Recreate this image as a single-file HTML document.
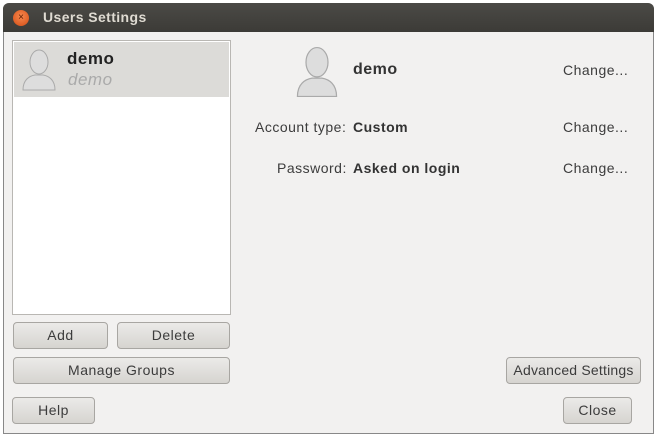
<!DOCTYPE html><html><head><style>
body{margin:0;width:658px;height:436px;background:#fff;font-family:"Liberation Sans","DejaVu Sans",sans-serif;position:relative;overflow:hidden}
.win{position:absolute;left:3px;top:3px;width:651px;height:431px;background:#f2f1f0;border:1px solid #888;border-top:none;box-sizing:border-box;border-radius:6px 6px 0 0}
.tb{position:absolute;left:3px;top:3px;width:651px;height:29px;background:linear-gradient(#4b4a46,#3c3b37);border-radius:6px 6px 0 0}
.close{position:absolute;left:13px;top:10px;width:16px;height:16px;border-radius:50%;background:radial-gradient(circle at 50% 40%,#f7894f,#d34c14);color:#5a1a00;font-size:10px;line-height:16px;text-align:center}
.title{position:absolute;left:43px;top:9px;color:#dfdbd2;font-weight:bold;font-size:14px;letter-spacing:0.4px}
.t{position:absolute;font-size:14px;color:#3c3c3c;white-space:nowrap;letter-spacing:0.5px}
.b{font-weight:bold;color:#333}
.btn{position:absolute;box-sizing:border-box;border:1px solid #a8a6a2;border-radius:4px;background:linear-gradient(#ebeae8,#d6d4d0);font-size:14px;color:#3c3c3c;text-align:center;letter-spacing:0.5px}
.list{position:absolute;left:12px;top:40px;width:219px;height:275px;background:#fff;border:1px solid #b9b7b3;box-sizing:border-box}
.sel{position:absolute;left:1px;top:1px;right:1px;height:55px;background:#dcdbd8}
</style></head><body>
<div class="win"></div>
<div class="tb"></div>
<div class="close">×</div>
<div class="title">Users Settings</div>
<div class="list"><div class="sel"></div></div>
<svg style="position:absolute;left:21px;top:48px" width="36" height="44" viewBox="0 0 36 44"><ellipse cx="18" cy="14" rx="9" ry="12" fill="#ddd" stroke="#aaa"/><path d="M2 42 C2 32 8 28 14 27 L22 27 C28 28 34 32 34 42 Z" fill="#ddd" stroke="#aaa"/></svg>
<div class="t b" style="left:67px;top:49px;font-size:17px;color:#222">demo</div>
<div class="t" style="left:68px;top:70px;font-size:17px;font-style:italic;color:#aaa">demo</div>
<svg style="position:absolute;left:295px;top:45px" width="44" height="54" viewBox="0 0 36 44"><ellipse cx="18" cy="14" rx="9" ry="12" fill="#ddd" stroke="#aaa"/><path d="M2 42 C2 32 8 28 14 27 L22 27 C28 28 34 32 34 42 Z" fill="#ddd" stroke="#aaa"/></svg>
<div class="t b" style="left:353px;top:61px;font-size:16px">demo</div>
<div class="t" style="left:563px;top:62px">Change...</div>
<div class="t" style="left:255px;top:119px">Account type:</div>
<div class="t b" style="left:353px;top:119px">Custom</div>
<div class="t" style="left:563px;top:119px">Change...</div>
<div class="t" style="left:277px;top:160px">Password:</div>
<div class="t b" style="left:353px;top:160px">Asked on login</div>
<div class="t" style="left:563px;top:160px">Change...</div>
<div class="btn" style="left:13px;top:322px;width:95px;height:27px;line-height:25px">Add</div>
<div class="btn" style="left:117px;top:322px;width:113px;height:27px;line-height:25px">Delete</div>
<div class="btn" style="left:13px;top:357px;width:217px;height:27px;line-height:25px">Manage Groups</div>
<div class="btn" style="left:12px;top:397px;width:83px;height:27px;line-height:25px">Help</div>
<div class="btn" style="left:506px;top:357px;width:135px;height:27px;line-height:25px;letter-spacing:0.2px">Advanced Settings</div>
<div class="btn" style="left:563px;top:397px;width:69px;height:27px;line-height:25px">Close</div>
</body></html>
